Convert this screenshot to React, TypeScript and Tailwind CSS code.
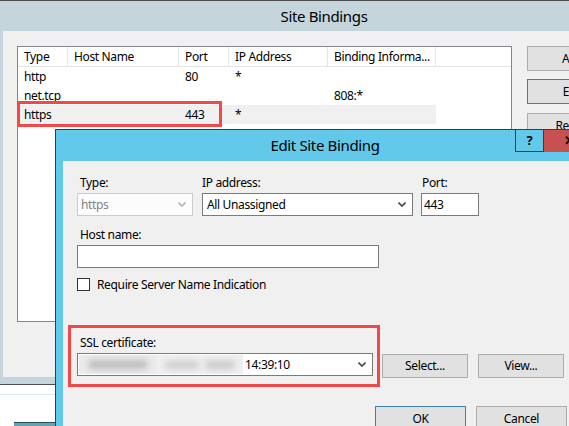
import React from 'react'

const font = { fontFamily: '"Segoe UI", "Noto Sans", sans-serif' }

function Chevron({ color = '#444' }: { color?: string }) {
  return (
    <svg width="8" height="5" viewBox="0 0 8 5" fill="none" stroke={color} strokeWidth="1.6">
      <path d="M0.5 0.5 L4 4 L7.5 0.5" />
    </svg>
  )
}

function Button({ label, focused, className = '' }: { label: string; focused?: boolean; className?: string }) {
  return (
    <div
      className={`flex items-center justify-center bg-[#e1e1e1] border text-[12px] text-black whitespace-nowrap ${
        focused ? 'border-[#3c7fb1]' : 'border-[#adadad]'
      } ${className}`}
    >
      {label}
    </div>
  )
}

const cols = [
  { w: 'w-[50px]', label: 'Type' },
  { w: 'w-[111px]', label: 'Host Name' },
  { w: 'w-[50px]', label: 'Port' },
  { w: 'w-[99px]', label: 'IP Address' },
  { w: 'w-[108px]', label: 'Binding Informa...' },
]

const rows = [
  ['http', '', '80', '*', ''],
  ['net.tcp', '', '', '', '808:*'],
  ['https', '', '443', '*', ''],
]

function SiteBindings() {
  return (
    <div className="absolute left-0 top-0 w-[648px] h-[385px] bg-[#c4d6dc] border-t border-b border-[#4d4d4d] flex flex-col">
      <div className="h-[30px] flex items-center justify-center text-[15px] text-black">Site Bindings</div>
      <div className="mx-[3px] h-[346px] bg-[#f0f0f0] pt-[15px] pl-[14px] flex">
        <div className="w-[495px] h-[276px] bg-white border border-[#828790]">
          <div className="flex h-[20px] border-b border-[#e5e5e5]">
            {cols.map((c) => (
              <div
                key={c.label}
                className={`${c.w} h-full border-r border-[#e5e5e5] pl-[6px] text-[12px] leading-[20px] text-black whitespace-nowrap overflow-hidden`}
              >
                {c.label}
              </div>
            ))}
          </div>
          {rows.map((r, i) => (
            <div key={i} className={`flex h-[19px] w-[418px] ${i === 2 ? 'bg-[#f0f0f0]' : ''}`}>
              {r.map((cell, j) => (
                <div key={j} className={`${cols[j].w} pl-[6px] text-[12px] leading-[19px] text-black whitespace-nowrap`}>
                  {cell}
                </div>
              ))}
            </div>
          ))}
        </div>
        <div className="ml-[15px] flex flex-col">
          <Button label="Add..." className="w-[100px] h-[25px]" />
          <Button label="Edit..." focused className="w-[100px] h-[25px] mt-[8px]" />
          <Button label="Remove" className="w-[100px] h-[25px] mt-[9px]" />
        </div>
      </div>
    </div>
  )
}

function EditBinding() {
  return (
    <div className="absolute left-[55px] top-[129px] w-[540px] h-[320px] bg-[#63c9ea] border border-[#3b3b3b] flex flex-col">
      <div className="relative h-[31px] flex items-center justify-center text-[15px] text-black">
        Edit Site Binding
        <div className="absolute left-[459px] top-0 w-[29px] h-[22px] border border-t-0 border-[#3b3b3b] flex items-center justify-center text-[13px] font-bold">
          ?
        </div>
        <div className="absolute left-[488px] top-0 w-[51px] h-[22px] bg-[#c75050] flex items-center justify-center text-[13px] font-bold text-black">
          ✕
        </div>
      </div>
      <div className="relative flex-1 ml-[7px] bg-[#f0f0f0] pl-[14px] pt-[14px] text-[12px] text-black">
        <div className="flex">
          <div className="flex flex-col">
            <div className="h-[16px] leading-[16px] pl-[3px] mb-[2px]">Type:</div>
            <div className="w-[116px] h-[23px] bg-[#fcfcfc] border border-[#cccccc] flex items-center justify-between pl-[3px] pr-[6px] text-[#838383]">
              https
              <Chevron color="#b5b5b5" />
            </div>
          </div>
          <div className="flex flex-col ml-[9px]">
            <div className="h-[16px] leading-[16px] mb-[2px]">IP address:</div>
            <div className="w-[211px] h-[23px] bg-white border border-[#7a7a7a] flex items-center justify-between pl-[4px] pr-[6px]">
              All Unassigned
              <Chevron />
            </div>
          </div>
          <div className="flex flex-col ml-[8px]">
            <div className="h-[16px] leading-[16px] pl-[1px] mb-[2px]">Port:</div>
            <div className="w-[58px] h-[23px] bg-white border border-[#7a7a7a] flex items-center pl-[2px]">443</div>
          </div>
        </div>
        <div className="h-[16px] leading-[16px] pl-[3px] mt-[11px] mb-[2px]">Host name:</div>
        <div className="w-[302px] h-[23px] bg-white border border-[#7a7a7a]" />
        <div className="flex items-center mt-[10px] h-[13px]">
          <div className="w-[13px] h-[13px] bg-white border border-[#333]" />
          <span className="ml-[7px]">Require Server Name Indication</span>
        </div>
        <div className="h-[16px] leading-[16px] pl-[3px] mt-[44px] mb-[2px]">SSL certificate:</div>
        <div className="flex">
          <div className="w-[296px] h-[23px] bg-white border border-[#7a7a7a] flex items-center pl-[1px] pr-[6px]">
            <div className="w-[164px] h-[19px] flex overflow-hidden">
              <div className="w-[78px] h-full bg-[#ebebeb] flex items-center justify-center">
                <div className="w-[60px] h-[9px] rounded-full bg-[#bdbdbd] blur-[3px]" />
              </div>
              <div className="w-[86px] h-full bg-[#efefef] flex items-center justify-center gap-[6px]">
                <div className="w-[34px] h-[8px] rounded-full bg-[#cdcdcd] blur-[3px]" />
                <div className="w-[30px] h-[8px] rounded-full bg-[#c8c8c8] blur-[3px]" />
              </div>
            </div>
            <span className="ml-[2px]">14:39:10</span>
            <span className="ml-auto">
              <Chevron />
            </span>
          </div>
          <Button label="Select..." className="w-[86px] h-[24px] ml-[9px] mt-[1px]" />
          <Button label="View..." className="w-[86px] h-[24px] ml-[10px] mt-[1px]" />
        </div>
        <div className="flex mt-[28px] ml-[298px]">
          <Button label="OK" focused className="w-[91px] h-[25px]" />
          <Button label="Cancel" className="w-[91px] h-[25px] ml-[10px]" />
        </div>
        <div className="absolute left-[5px] top-[164px] w-[312px] h-[62px] border-[3px] border-[#f24848]" />
      </div>
    </div>
  )
}

export default function App() {
  return (
    <div className="relative w-[569px] h-[426px] overflow-hidden bg-white tracking-[-0.35px]" style={font}>
      <div className="absolute left-0 top-[394px] w-[60px] h-px bg-[#dce9f5]" />
      <div className="absolute left-[14px] top-[422px] w-[600px] h-[10px] bg-[#5ba7b8] border-t border-[#2e4f58]" />
      <SiteBindings />
      <div className="absolute left-[17px] top-[101px] w-[205px] h-[26px] border-[3px] border-[#f24848]" />
      <EditBinding />
    </div>
  )
}
